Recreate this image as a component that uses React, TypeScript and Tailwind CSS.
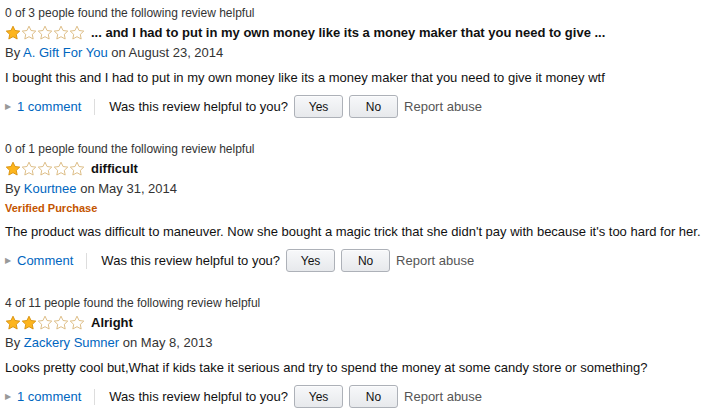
import React from "react";

type Review = {
  helpful: string;
  rating: number;
  title: string;
  author: string;
  date: string;
  verified?: boolean;
  body: string;
  comment: string;
};

const REVIEWS: Review[] = [
  {
    helpful: "0 of 3 people found the following review helpful",
    rating: 1,
    title: "... and I had to put in my own money like its a money maker that you need to give ...",
    author: "A. Gift For You",
    date: "August 23, 2014",
    body: "I bought this and I had to put in my own money like its a money maker that you need to give it money wtf",
    comment: "1 comment",
  },
  {
    helpful: "0 of 1 people found the following review helpful",
    rating: 1,
    title: "difficult",
    author: "Kourtnee",
    date: "May 31, 2014",
    verified: true,
    body: "The product was difficult to maneuver. Now she bought a magic trick that she didn't pay with because it's too hard for her.",
    comment: "Comment",
  },
  {
    helpful: "4 of 11 people found the following review helpful",
    rating: 2,
    title: "Alright",
    author: "Zackery Sumner",
    date: "May 8, 2013",
    body: "Looks pretty cool but,What if kids take it serious and try to spend the money at some candy store or something?",
    comment: "1 comment",
  },
];

const STAR = "M8 1.2l2.05 4.3 4.7.6-3.45 3.25.88 4.65L8 11.7l-4.18 2.3.88-4.65L1.25 6.1l4.7-.6z";

function Stars({ n }: { n: number }) {
  return (
    <div className="flex shrink-0">
      {[0, 1, 2, 3, 4].map((i) => (
        <svg key={i} width="16" height="16" viewBox="0 0 16 16">
          {i < n ? (
            <path d={STAR} fill="#fdb51d" stroke="#d7900b" strokeWidth="0.9" strokeLinejoin="round" />
          ) : (
            <path d={STAR} fill="#fff" stroke="#d9b77a" strokeWidth="0.9" strokeLinejoin="round" />
          )}
        </svg>
      ))}
    </div>
  );
}

function Btn({ label }: { label: string }) {
  return (
    <button className="w-[49px] h-[23px] rounded-[3px] border border-[#adb1b8] bg-gradient-to-b from-[#f7f8fa] to-[#e7e9ec] text-[12px] text-[#111] shadow-[0_1px_0_rgba(255,255,255,0.6)_inset]">
      {label}
    </button>
  );
}

function ReviewItem({ r }: { r: Review }) {
  return (
    <div className="flex flex-col">
      <div className="text-[12px] leading-[19px] text-[#333]">{r.helpful}</div>
      <div className="flex items-center gap-[6px] h-[19px]">
        <Stars n={r.rating} />
        <span className="text-[13px] font-bold text-[#111] whitespace-nowrap">{r.title}</span>
      </div>
      <div className="text-[13px] leading-[19px] text-[#333] mt-px">
        By <a className="text-[#0066c0]">{r.author}</a> on {r.date}
      </div>
      {r.verified && (
        <div className="text-[11px] leading-[18px] font-bold text-[#c45500] mt-px">Verified Purchase</div>
      )}
      <div className={`text-[13px] leading-[19px] text-[#111] ${r.verified ? "mt-[5px]" : "mt-[6px]"}`}>{r.body}</div>
      <div className="flex items-center h-[23px] mt-[8px] text-[13px]">
        <span className="text-[#999] text-[8px] mr-[6px]">▶</span>
        <a className="text-[#0066c0]">{r.comment}</a>
        <span className="w-px h-[16px] bg-[#ddd] ml-[13px] mr-[14px]" />
        <span className="text-[#111] mr-[6px]">Was this review helpful to you?</span>
        <div className="flex gap-[6px]">
          <Btn label="Yes" />
          <Btn label="No" />
        </div>
        <span className="text-[#555] ml-[6px]">Report abuse</span>
      </div>
    </div>
  );
}

export default function App() {
  return (
    <div className="w-[727px] h-[413px] bg-white overflow-hidden px-[5px] pt-[4px] flex flex-col gap-[22px] font-['Liberation_Sans',Arial,sans-serif]">
      {REVIEWS.map((r, i) => (
        <ReviewItem key={i} r={r} />
      ))}
    </div>
  );
}
